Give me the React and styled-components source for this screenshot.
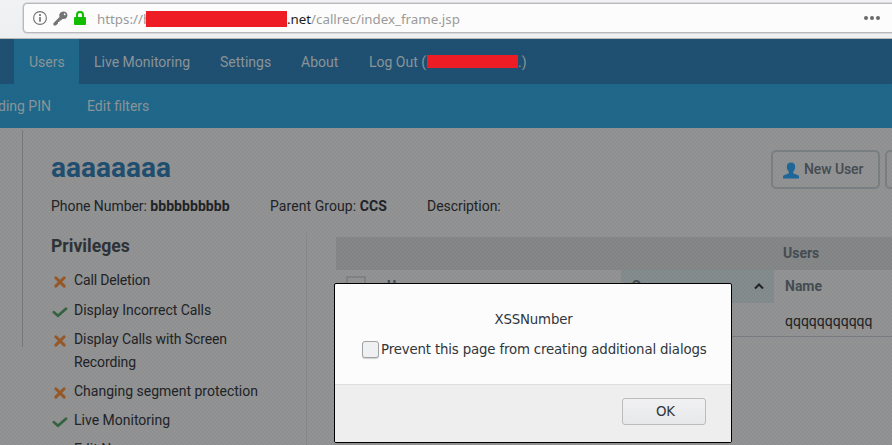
import React from "react";
import styled, { createGlobalStyle } from "styled-components";

const Global = createGlobalStyle`
  * { box-sizing: border-box; }
  body { margin: 0; overflow: hidden; font-family: Roboto, sans-serif; }
`;

const Window = styled.div`
  position: relative;
  width: 892px;
  height: 445px;
  overflow: hidden;
  display: flex;
  flex-direction: column;
  background: #939393;
`;

const Browser = styled.header`
  flex: none;
  height: 39px;
  padding: 3px 0 0 23px;
  background: linear-gradient(#f1f2f3, #eeeff1);
  border-bottom: 1px solid #b9b9ba;
`;

const AddressBar = styled.div`
  width: 900px;
  height: 30px;
  display: flex;
  align-items: center;
  padding-left: 9px;
  background: #fcfcfc;
  border: 1px solid #b9b9bb;
  border-radius: 4px;
  box-shadow: 0 0 0 0.5px #c4c4c6;
  font: 13.33px/18px "Noto Sans", sans-serif;
  color: #9a9a9a;
  white-space: pre;

  svg { flex: none; }
`;

const IconGroup = styled.div`
  display: flex;
  align-items: center;
  gap: 6px;
`;

const Url = styled.div`
  display: flex;
  align-items: center;
  margin-left: 11px;
  padding-top: 2px;
  width: 363px;
  b { font-weight: 400; color: #1c1c1c; }
`;

const Redaction = styled.span`
  flex: none;
  position: relative;
  z-index: 2;
  width: ${(p) => p.$w}px;
  height: ${(p) => p.$h}px;
  margin: 0 0 ${(p) => p.$mb || 0}px ${(p) => p.$ml || 0}px;
  background: #ee1c25;
`;

const MoreDots = styled.svg`
  margin-left: 404px;
`;

const Page = styled.main`
  position: relative;
  flex: 1;
  min-height: 0;
  display: flex;
  flex-direction: column;
  color: #202225;
  font-size: 14px;
`;

const Texture = styled.div`
  position: absolute;
  inset: 0;
  z-index: 1;
  pointer-events: none;
  background-image:
    conic-gradient(rgba(40, 60, 80, 0.05) 25%, transparent 0 50%, rgba(40, 60, 80, 0.05) 0 75%, transparent 0);
  background-size: 4px 4px;
`;

const MainNav = styled.nav`
  flex: none;
  height: 45px;
  display: flex;
  padding-left: 14px;
  background: #1f5072;
  color: #8d9699;
`;

const NavItem = styled.a`
  display: flex;
  align-items: center;
  height: 45px;
  width: ${(p) => p.$w}px;
  padding: 1px 0 0 15px;
  white-space: pre;
  background: ${(p) => (p.$active ? "#1f688b" : "transparent")};
`;

const SubNav = styled.nav`
  flex: none;
  height: 44px;
  display: flex;
  align-items: center;
  gap: 36px;
  background: #1f688b;
  color: #8d9699;
  white-space: pre;
`;

const ClippedItem = styled.a`
  width: 51px;
  display: flex;
  justify-content: flex-end;
`;

const Body = styled.div`
  flex: 1;
  min-height: 0;
  display: flex;
  padding-top: 2px;
`;

const SideRail = styled.aside`
  flex: none;
  width: 23px;
  height: 217px;
  border-right: 1px solid #78797b;
`;

const Content = styled.section`
  flex: 1;
  min-width: 0;
  padding-left: 28px;
`;

const Heading = styled.header`
  height: 67px;
  display: flex;
  justify-content: space-between;
  padding-top: 20px;
`;

const Title = styled.h1`
  margin: 2px 0 0;
  font: 700 28px/32px Roboto, sans-serif;
  color: #1f4e70;
`;

const Actions = styled.div`
  display: flex;
  gap: 5px;
  width: 121px;
`;

const ActionButton = styled.div`
  flex: none;
  width: 109px;
  height: 39px;
  display: flex;
  align-items: center;
  gap: 5px;
  padding: 0 0 1px 10px;
  border: 2px solid #7b8083;
  border-radius: 5px;
  font-weight: 500;
  letter-spacing: -0.1px;
  color: #454c52;
  white-space: pre;
  svg { margin-top: 2px; }
`;

const Details = styled.div`
  display: flex;
  height: 36px;
  line-height: 18px;
  white-space: pre;
`;

const Detail = styled.span`
  width: ${(p) => p.$w}px;
  letter-spacing: ${(p) => p.$spacing}px;
  b { font-weight: 700; letter-spacing: 0.05px; }
`;

const Columns = styled.div`
  display: flex;
`;

const Privileges = styled.section`
  flex: none;
  width: 256px;
  height: 230px;
  border-right: 1px solid #888a8b;
`;

const SectionTitle = styled.h2`
  margin: 0;
  height: 36.4px;
  padding-top: 2px;
  font: 700 17.6px/23px Roboto, sans-serif;
  color: #2d3237;
`;

const Privilege = styled.div`
  display: flex;
  margin-bottom: 6.2px;
  line-height: 23px;
  width: 230px;
  letter-spacing: ${(p) => p.$spacing}px;
  svg { flex: none; margin: 4px 6px 0 1px; }
`;

const MoreText = styled.div`
  padding-left: 23px;
  line-height: 23px;
`;

const Table = styled.section`
  flex: 1;
  margin: 4px 0 0 29px;
  color: #454c52;
  font-weight: 700;
`;

const GroupRow = styled.div`
  height: 33px;
  padding: 8px 0 0 447px;
  line-height: 16px;
  background: #868787;
`;

const TableRow = styled.div`
  display: grid;
  grid-template-columns: 285px 153px 1fr;
  height: ${(p) => p.$h}px;
  border-bottom: ${(p) => (p.$line ? "1px solid #7a7e82" : "0")};
`;

const Cell = styled.div`
  display: flex;
  align-items: center;
  justify-content: space-between;
  padding: ${(p) => (p.$plain ? "2px" : 0)} 10px ${(p) => (p.$plain ? 0 : "1px")} 11px;
  background: ${(p) => (p.$sorted ? "#848c8e" : "transparent")};
  color: ${(p) => (p.$plain ? "#202225" : "inherit")};
  font-weight: ${(p) => (p.$plain ? 400 : 700)};
`;

const SelectCell = styled(Cell)`
  justify-content: flex-start;
  gap: 21px;
  padding-left: 10px;
`;

const GreyCheck = styled.span`
  width: 20px;
  height: 20px;
  border: 2px solid #828384;
`;

const Dialog = styled.div`
  position: absolute;
  left: 334px;
  top: 283px;
  z-index: 3;
  width: 398px;
  height: 160px;
  display: flex;
  flex-direction: column;
  background: #fcfcfc;
  border: 1px solid #000;
  border-radius: 2px;
  overflow: hidden;
  color: #31363b;
  font: 13.33px/18px "DejaVu Sans", sans-serif;
`;

const Message = styled.div`
  height: 100px;
  padding: 27px 0 0 1px;
  text-align: center;
  letter-spacing: -0.16px;
`;

const Option = styled.label`
  display: flex;
  align-items: center;
  gap: 2px;
  margin: 12px 0 0 26px;
  white-space: pre;
`;

const CheckBox = styled.span`
  width: 17px;
  height: 17px;
  margin-bottom: 1px;
  background: #eff0f1;
  border: 1px solid #a0a2a4;
  border-radius: 3px;
  box-shadow: 0 1px 1px #cfcfcf;
`;

const DialogFooter = styled.footer`
  flex: 1;
  display: flex;
  justify-content: flex-end;
  padding: 13px 25px 0 0;
  border-top: 1px solid #dedfdf;
  background: #eeeeee;
`;

const OkButton = styled.button`
  width: 84px;
  height: 27px;
  padding: 0 0 0 3px;
  background: linear-gradient(#f1f1f2, #e7e8ea);
  border: 1px solid #babcbe;
  border-radius: 3px;
  color: #31363b;
  font: 13.33px "DejaVu Sans", sans-serif;
`;

const InfoIcon = () => (
  <svg width="14" height="14" viewBox="0 0 14 14" fill="none" stroke="#737373">
    <circle cx="7" cy="7" r="6.4" strokeWidth="1.1" />
    <path d="M7 6v4.700M7 3v2" strokeWidth="1.700" />
  </svg>
);

const KeyIcon = () => (
  <svg width="15" height="15" viewBox="0 0 15 15">
    <path
      fillRule="evenodd"
      fill="#737373"
      d="M7.600 1.500C9.300 0 11.800 0 13.300 1.500s1.500 3.900.2 5.300c-1 1.100-2.500 1.400-3.800 1L8 9.500H6.500V11H5v1.500L2.800 14.500H1L.4 13.900V12.200L6.500 6C6 4.300 6.300 2.700 7.600 1.500zM11 2.600a1 1 0 0 0 1.400 1.400 1 1 0 0 0-1.400-1.400z"
    />
  </svg>
);

const LockIcon = () => (
  <svg width="12" height="14" viewBox="0 0 12 14">
    <path d="M3 7V3.900a3 3 0 0 1 6 0V7" fill="none" stroke="#12bc00" strokeWidth="2" />
    <rect y="6" width="12" height="8" rx="1" fill="#12bc00" />
  </svg>
);

const UserIcon = () => (
  <svg width="16" height="17" viewBox="0 0 16 17" fill="#1f6799">
    <path d="M8 .5c2.800 0 4.200 1.700 4.200 4.200 0 2-.8 3.900-2 5v1.600l4.800 1.900c.7.300 1 .8 1 1.500V16.500H0v-1.800c0-.7.3-1.200 1-1.500l4.800-1.900V9.700c-1.200-1.100-2-3-2-5C3.800 2.200 5.200.5 8 .5z" />
  </svg>
);

const StateIcon = ({ on }) => (
  <svg width="16" height="16" viewBox="0 0 16 16" fill="none" strokeLinecap="round">
    {on ? (
      <path d="M1.900 9.200 6 12.700 14 5.700" stroke="#346340" strokeWidth="2.700" />
    ) : (
      <path d="M3.800 4.700 12.200 13.100M12.200 4.700 3.800 13.100" stroke="#985927" strokeWidth="2.900" />
    )}
  </svg>
);

const SortIcon = () => (
  <svg width="10" height="8" fill="none" stroke="#202225" strokeWidth="2">
    <path d="M1 6.500 5 2.500 9 6.500" />
  </svg>
);

const privileges = [
  ["Call Deletion", false, -0.15],
  ["Display Incorrect Calls", true, -0.06],
  ["Display Calls with Screen Recording", false, -0.1],
  ["Changing segment protection", false, 0],
  ["Live Monitoring", true, 0],
];

export default function App() {
  return (
    <Window>
      <Global />
      <Browser>
        <AddressBar>
          <IconGroup><InfoIcon /><KeyIcon /><LockIcon /></IconGroup>
          <Url>
            https://b
            <Redaction $w={141} $h={16} $ml={-5.2} $mb={1} />
            <b>.net</b>/callrec/index_frame.jsp
          </Url>
          <MoreDots width="36" height="12" fill="#68696b">
            <circle cx="2" cy="6" r="2" /><circle cx="8" cy="6" r="2" /><circle cx="14" cy="6" r="2" />
            <path d="M28 0h3v9h-3z" />
          </MoreDots>
        </AddressBar>
      </Browser>
      <Page>
        <MainNav>
          <NavItem $w={65} $active>Users</NavItem>
          <NavItem $w={126}>Live Monitoring</NavItem>
          <NavItem $w={81}>Settings</NavItem>
          <NavItem $w={68}>About</NavItem>
          <NavItem $w={200}>Log Out (<Redaction $w={91} $h={13} $ml={1} $mb={1} />.)</NavItem>
        </MainNav>
        <SubNav><ClippedItem>ding PIN</ClippedItem><a>Edit filters</a></SubNav>
        <Body>
          <SideRail />
          <Content>
            <Heading>
              <Title>aaaaaaaa</Title>
              <Actions>
                <ActionButton><UserIcon />New User</ActionButton>
                <ActionButton />
              </Actions>
            </Heading>
            <Details>
              <Detail $w={219} $spacing={-0.05}>Phone Number: <b>bbbbbbbbbb</b></Detail>
              <Detail $w={157} $spacing={0.07}>Parent Group: <b>CCS</b></Detail>
              <Detail $w={157} $spacing={-0.05}>Description:</Detail>
            </Details>
            <Columns>
              <Privileges>
                <SectionTitle>Privileges</SectionTitle>
                {privileges.map(([name, on, spacing]) => (
                  <Privilege key={name} $spacing={spacing}><StateIcon on={on} />{name}</Privilege>
                ))}
                <MoreText>Edit Name</MoreText>
              </Privileges>
              <Table>
                <GroupRow>Users</GroupRow>
                <TableRow $h={33}>
                  <SelectCell><GreyCheck />Users</SelectCell>
                  <Cell $sorted>Surname<SortIcon /></Cell>
                  <Cell>Name</Cell>
                </TableRow>
                <TableRow $h={34} $line>
                  <Cell /><Cell /><Cell $plain>qqqqqqqqqqq</Cell>
                </TableRow>
              </Table>
            </Columns>
          </Content>
        </Body>
        <Texture />
      </Page>
      <Dialog>
        <Message>
          XSSNumber
          <Option><CheckBox />Prevent this page from creating additional dialogs</Option>
        </Message>
        <DialogFooter><OkButton>OK</OkButton></DialogFooter>
      </Dialog>
    </Window>
  );
}
